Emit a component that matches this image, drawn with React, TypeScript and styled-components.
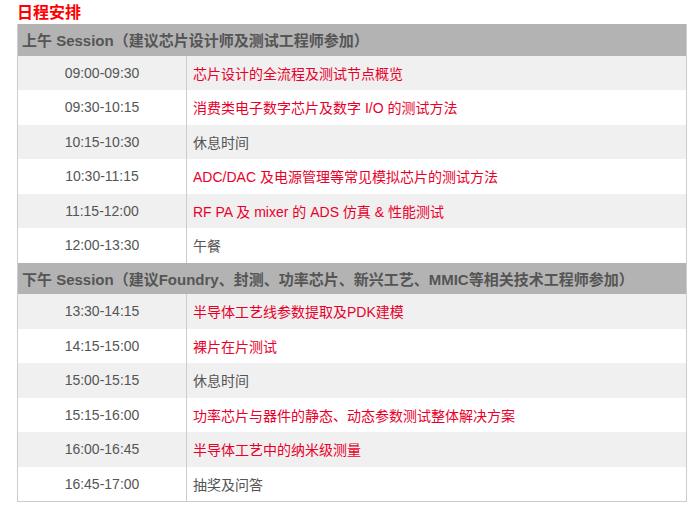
import React from 'react';
import styled, { createGlobalStyle } from 'styled-components';

const GlobalStyle = createGlobalStyle`
  html, body {
    margin: 0;
    padding: 0;
    background: #fff;
  }
  body {
    font-family: "Liberation Sans", Arial, "Noto Sans CJK SC", sans-serif;
  }
`;

type Item = { time: string; title: string; highlight?: boolean };
type Session = { label: string; items: Item[] };

const sessions: Session[] = [
  {
    label: '上午 Session（建议芯片设计师及测试工程师参加）',
    items: [
      { time: '09:00-09:30', title: '芯片设计的全流程及测试节点概览', highlight: true },
      { time: '09:30-10:15', title: '消费类电子数字芯片及数字 I/O 的测试方法', highlight: true },
      { time: '10:15-10:30', title: '休息时间' },
      { time: '10:30-11:15', title: 'ADC/DAC 及电源管理等常见模拟芯片的测试方法', highlight: true },
      { time: '11:15-12:00', title: 'RF PA 及 mixer 的 ADS 仿真 & 性能测试', highlight: true },
      { time: '12:00-13:30', title: '午餐' },
    ],
  },
  {
    label: '下午 Session（建议Foundry、封测、功率芯片、新兴工艺、MMIC等相关技术工程师参加）',
    items: [
      { time: '13:30-14:15', title: '半导体工艺线参数提取及PDK建模', highlight: true },
      { time: '14:15-15:00', title: '裸片在片测试', highlight: true },
      { time: '15:00-15:15', title: '休息时间' },
      { time: '15:15-16:00', title: '功率芯片与器件的静态、动态参数测试整体解决方案', highlight: true },
      { time: '16:00-16:45', title: '半导体工艺中的纳米级测量', highlight: true },
      { time: '16:45-17:00', title: '抽奖及问答' },
    ],
  },
];

const Page = styled.div`
  width: 670px;
  padding: 0 9px 0 17px;
`;

const Title = styled.h2`
  margin: 0;
  height: 24px;
  line-height: 23px;
  font-size: 16px;
  font-weight: bold;
  color: #ff0000;
  font-family: "Noto Sans CJK SC", sans-serif;
`;

const Table = styled.div`
  border: 1px solid #cccccc;
  border-top: none;
`;

const SessionHeader = styled.div`
  height: 31.5px;
  display: flex;
  align-items: center;
  padding: 0 4px;
  background: #b3b3b3;
  color: #555555;
  font-family: "Liberation Sans", Arial, "Noto Sans CJK SC", sans-serif;
  font-size: 15px;
  font-weight: bold;
  white-space: nowrap;
`;

const Row = styled.div<{ $shaded: boolean }>`
  display: grid;
  grid-template-columns: 169px 1fr;
  height: 34.5px;
  background: ${({ $shaded }) => ($shaded ? '#f0f0f0' : '#ffffff')};
`;

const TimeCell = styled.div`
  display: flex;
  align-items: center;
  justify-content: center;
  border-right: 1px solid #cccccc;
  color: #555555;
  font-size: 14px;
`;

const TopicCell = styled.div<{ $highlight: boolean }>`
  display: flex;
  align-items: center;
  padding-left: 6px;
  color: ${({ $highlight }) => ($highlight ? '#e8002b' : '#555555')};
  font-size: 14px;
  white-space: nowrap;
`;

export default function App() {
  return (
    <Page>
      <GlobalStyle />
      <Title>日程安排</Title>
      <Table>
        {sessions.map((s) => (
          <React.Fragment key={s.label}>
            <SessionHeader>{s.label}</SessionHeader>
            {s.items.map((it, i) => (
              <Row key={it.time} $shaded={i % 2 === 0}>
                <TimeCell>{it.time}</TimeCell>
                <TopicCell $highlight={!!it.highlight}>{it.title}</TopicCell>
              </Row>
            ))}
          </React.Fragment>
        ))}
      </Table>
    </Page>
  );
}
